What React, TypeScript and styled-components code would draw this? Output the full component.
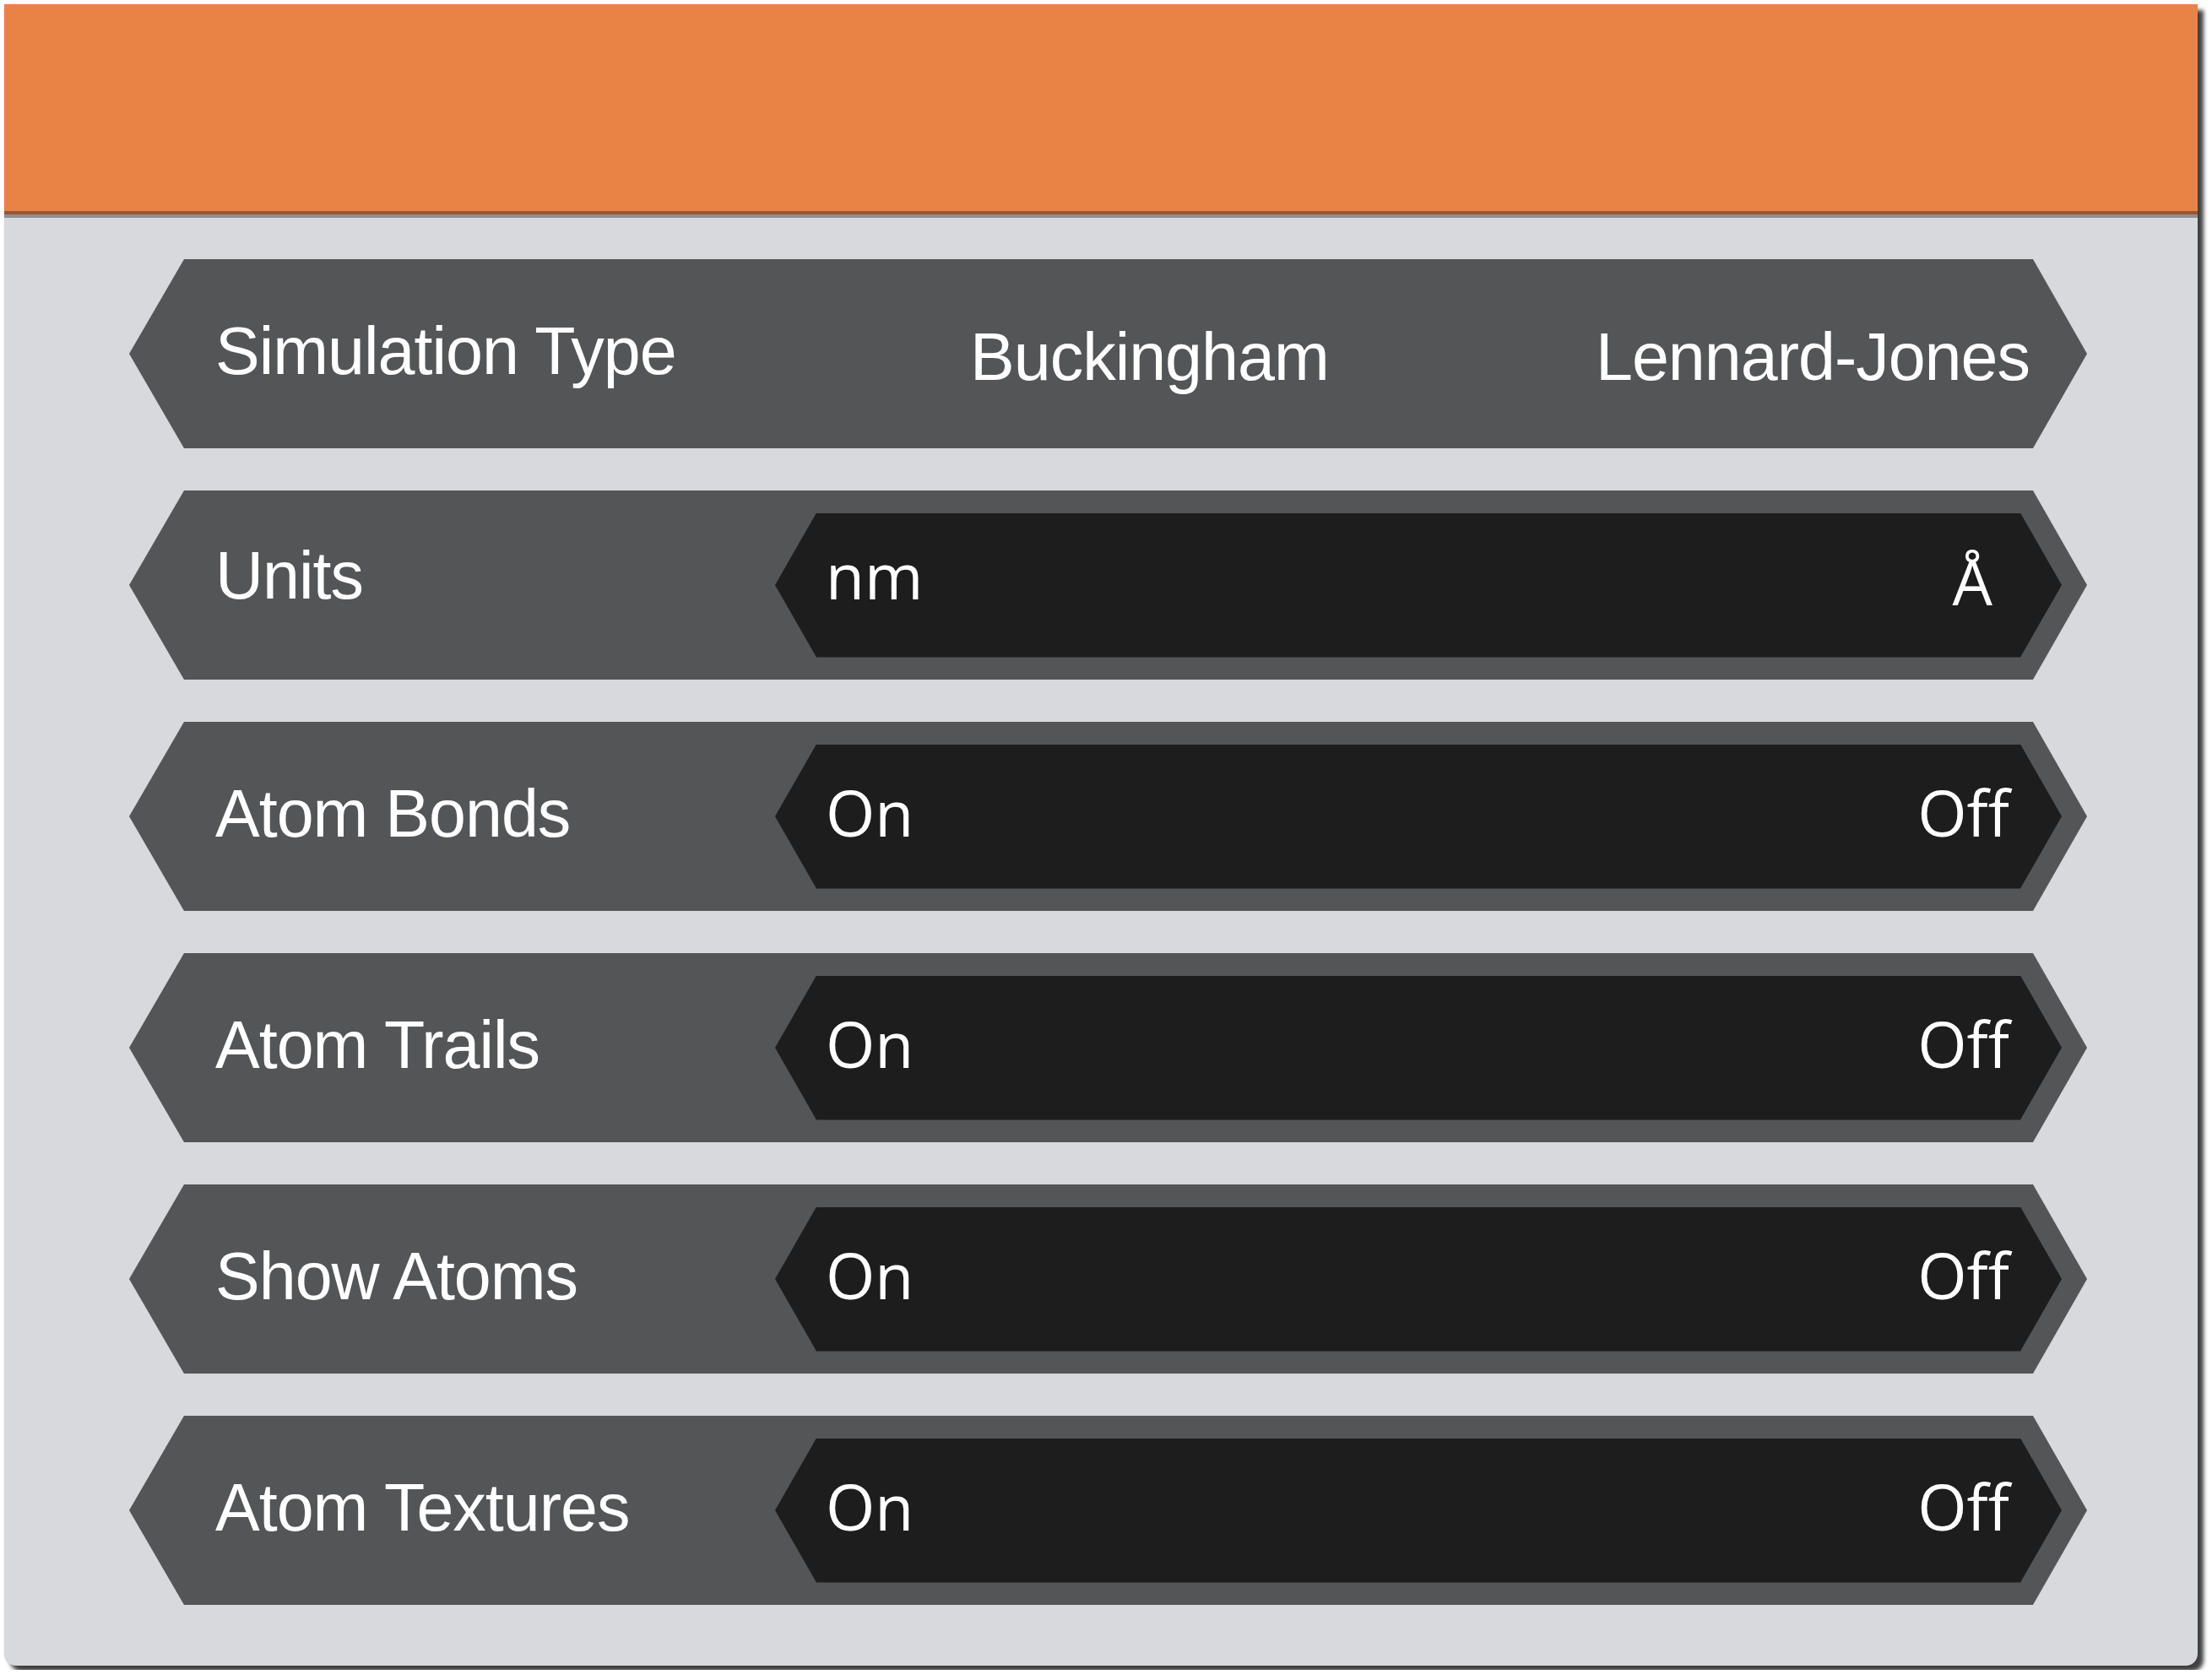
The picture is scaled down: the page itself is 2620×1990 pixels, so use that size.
import styled, { createGlobalStyle } from "styled-components";

const GlobalStyle = createGlobalStyle`
  *, *::before, *::after {
    box-sizing: border-box;
  }
  html, body {
    margin: 0;
    padding: 0;
    background: #ffffff;
  }
`;

const Panel = styled.div`
  margin: 5px;
  width: 2598px;
  height: 1968px;
  display: flex;
  flex-direction: column;
  background: #d8d9dc;
  border-radius: 0 0 14px 14px;
  box-shadow: 7px 7px 5px rgba(0, 0, 0, 0.75), 0 0 2px rgba(0, 0, 0, 0.18);
`;

const Header = styled.header`
  height: 249px;
  flex: none;
  background: #e98345;
  border-bottom: 4px solid #9d5531;
  box-shadow: 0 4px 0 #8d8f94;
`;

const Body = styled.div`
  display: flex;
  flex-direction: column;
  gap: 50px;
  padding: 53px 131px 0 148px;
`;

const Row = styled.div`
  height: 224px;
  display: grid;
  grid-template-columns: 765px 1fr;
  align-items: center;
  padding-right: 30px;
  background: #545557;
  clip-path: polygon(
    65px 0,
    calc(100% - 64px) 0,
    100% 50%,
    calc(100% - 64px) 100%,
    65px 100%,
    0 50%
  );
`;

const Label = styled.div<{ $raised?: boolean }>`
  padding-left: 102px;
  padding-bottom: ${(p) => (p.$raised ? 23 : 7)}px;
  font: 400 79px/1 "Liberation Sans", Arial, sans-serif;
  letter-spacing: -1px;
  color: #ffffff;
  white-space: nowrap;
`;

const Options = styled.div`
  display: flex;
  justify-content: space-between;
  padding: 6px 38px 0 231px;
  font: 400 79px/1 "Liberation Sans", Arial, sans-serif;
  letter-spacing: -1px;
  color: #ffffff;
  white-space: nowrap;
`;

const Toggle = styled.div<{ $raised?: boolean }>`
  height: 171px;
  display: flex;
  align-items: center;
  justify-content: space-between;
  padding: 0 62px ${(p) => (p.$raised ? 24 : 10)}px 60px;
  background: #1d1d1d;
  clip-path: polygon(
    49px 0,
    calc(100% - 49px) 0,
    100% 50%,
    calc(100% - 49px) 100%,
    49px 100%,
    0 50%
  );
  font: 400 75px/1 "Open Sans", "Noto Sans", sans-serif;
  color: #ffffff;
`;

const Side = styled.span<{ $drop?: number; $inset?: number }>`
  padding-top: ${(p) => p.$drop ?? 0}px;
  margin-right: ${(p) => p.$inset ?? 0}px;
`;

const toggles = [
  { label: "Units", on: "nm", off: "Å", raised: true },
  { label: "Atom Bonds", on: "On", off: "Off" },
  { label: "Atom Trails", on: "On", off: "Off" },
  { label: "Show Atoms", on: "On", off: "Off" },
  { label: "Atom Textures", on: "On", off: "Off" },
];

export default function App() {
  return (
    <>
      <GlobalStyle />
      <Panel>
        <Header />
        <Body>
          <Row>
            <Label>Simulation Type</Label>
            <Options>
              <span>Buckingham</span>
              <span>Lennard-Jones</span>
            </Options>
          </Row>

          {toggles.map((t) => (
            <Row key={t.label}>
              <Label $raised={t.raised}>{t.label}</Label>
              <Toggle $raised={t.raised}>
                <Side>{t.on}</Side>
                <Side $drop={t.raised ? 14 : 0} $inset={t.raised ? 20 : 0}>
                  {t.off}
                </Side>
              </Toggle>
            </Row>
          ))}
        </Body>
      </Panel>
    </>
  );
}
